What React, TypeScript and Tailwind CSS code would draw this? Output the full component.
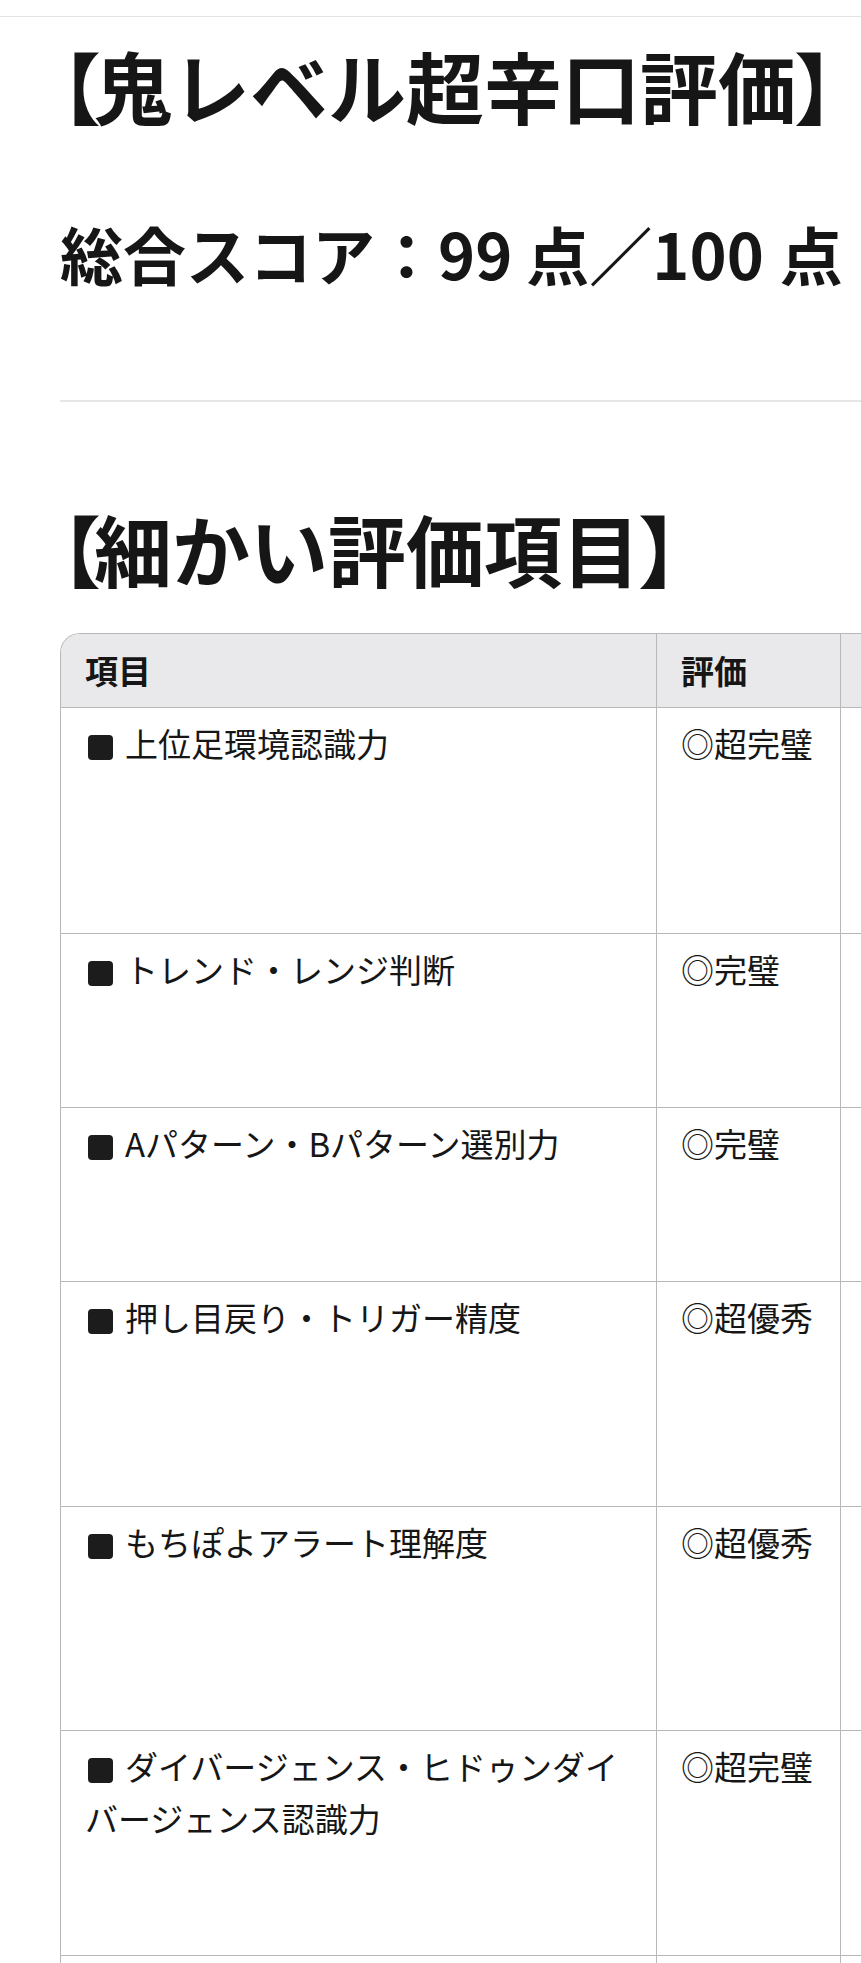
import React from "react";

const rows: { label: string; grade: string; h: string }[] = [
  { label: "上位足環境認識力", grade: "◎超完璧", h: "h-[226px]" },
  { label: "トレンド・レンジ判断", grade: "◎完璧", h: "h-[174px]" },
  { label: "Aパターン・Bパターン選別力", grade: "◎完璧", h: "h-[174px]" },
  { label: "押し目戻り・トリガー精度", grade: "◎超優秀", h: "h-[225px]" },
  { label: "もちぽよアラート理解度", grade: "◎超優秀", h: "h-[224px]" },
  { label: "ダイバージェンス・ヒドゥンダイバージェンス認識力", grade: "◎超完璧", h: "h-[225px]" },
];

function Bullet() {
  return (
    <span className="inline-block w-[25px] h-[25px] rounded-[4px] bg-[#1c1c1c] ml-[3px] mr-[12px] align-[-3px]" />
  );
}

function OpenBracket() {
  return <span className="[font-feature-settings:'palt'] tracking-[-5px]">【</span>;
}

function CloseBracket() {
  return <span className="[font-feature-settings:'palt']">】</span>;
}

export default function App() {
  return (
    <div className="w-[861px] h-[1963px] overflow-hidden bg-white text-[#161616] [font-family:'Noto_Sans_CJK_JP','Noto_Sans',sans-serif]">
      <div className="h-[16px]" />
      <div className="border-t border-[#e3e3e3]" />
      <div className="pl-[60px]">
        <h1 className="mt-[29px] text-[78px] leading-none font-bold whitespace-nowrap">
          <OpenBracket />鬼レベル超辛口評価<CloseBracket />
        </h1>
        <p className="mt-[97px] text-[63px] leading-none font-bold whitespace-nowrap">
          総合スコア：99<span className="ml-[14px]">点</span>／100<span className="ml-[16px]">点</span>
        </p>
        <div className="mt-[116px] h-[2px] w-[900px] bg-[#e6e6e6]" />
        <h2 className="mt-[107px] text-[78px] leading-none font-bold whitespace-nowrap">
          <OpenBracket />細かい評価項目<CloseBracket />
        </h2>
        <div className="mt-[46px] w-[1200px] border-l border-t border-[#b8b8b8] rounded-tl-[20px] overflow-hidden">
          <div className="grid grid-cols-[596px_184px_420px] bg-[#e9e9eb] text-[33px] font-bold leading-[51px]">
            <div className="border-r border-b border-[#b8b8b8] pl-[24px] pt-[11px] pb-[11px]">項目</div>
            <div className="border-r border-b border-[#b8b8b8] pl-[24px] pt-[11px] pb-[11px]">評価</div>
            <div className="border-r border-b border-[#b8b8b8] pl-[24px] pt-[11px] pb-[11px]" />
          </div>
          {rows.map((r) => (
            <div key={r.label} className={`grid grid-cols-[596px_184px_420px] text-[33px] leading-[52px] ${r.h}`}>
              <div className="border-r border-b border-[#b8b8b8] pl-[24px] pr-[24px] pt-[9px]">
                <Bullet />
                {r.label}
              </div>
              <div className="border-r border-b border-[#b8b8b8] pl-[24px] pt-[9px]">{r.grade}</div>
              <div className="border-r border-b border-[#b8b8b8]" />
            </div>
          ))}
          <div className="grid grid-cols-[596px_184px_420px] h-[200px]">
            <div className="border-r border-[#b8b8b8]" />
            <div className="border-r border-[#b8b8b8]" />
            <div className="border-r border-[#b8b8b8]" />
          </div>
        </div>
      </div>
    </div>
  );
}
